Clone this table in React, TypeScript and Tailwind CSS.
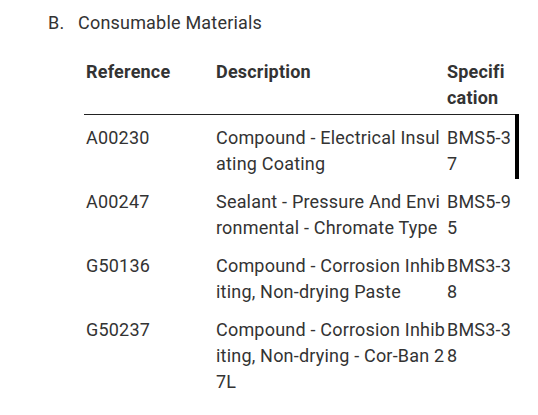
const rows = [
  { ref: "A00230", desc: "Compound - Electrical Insulating Coating", spec: "BMS5-37" },
  { ref: "A00247", desc: "Sealant - Pressure And Environmental - Chromate Type", spec: "BMS5-95" },
  { ref: "G50136", desc: "Compound - Corrosion Inhibiting, Non-drying Paste", spec: "BMS3-38" },
  { ref: "G50237", desc: "Compound - Corrosion Inhibiting, Non-drying - Cor-Ban 27L", spec: "BMS3-38" },
];

export default function App() {
  return (
    <div className="w-[538px] h-[415px] overflow-hidden bg-white text-[#333333] text-[18px] tracking-[0.2px] leading-[26px] font-['Roboto',sans-serif]">
      <div className="pt-[10px] pl-[48px] flex">
        <span className="w-[30px]">B.</span>
        <span>Consumable Materials</span>
      </div>
      <table className="ml-[84px] mt-[13px] table-fixed border-collapse w-[433px]">
        <colgroup>
          <col className="w-[132px]" />
          <col className="w-[231px]" />
          <col className="w-[70px]" />
        </colgroup>
        <thead>
          <tr className="border-b border-[#222222]">
            <th className="text-left align-top font-bold pt-[10px] pb-[3px] pl-[2px]">Reference</th>
            <th className="text-left align-top font-bold pt-[10px] pb-[3px]">Description</th>
            <th className="text-left align-top font-bold pt-[10px] pb-[3px] pr-[4px] break-all">Specification</th>
          </tr>
        </thead>
        <tbody>
          {rows.map((r, i) => (
            <tr key={r.ref}>
              <td className="align-top pt-[10px] pb-[2px] pl-[2px]">{r.ref}</td>
              <td className="align-top pt-[10px] pb-[2px] break-all pr-[1px]">{r.desc}</td>
              <td
                className={
                  i === 0
                    ? "align-top pt-[10px] pb-[2px] break-all border-r-[4px] border-black"
                    : "align-top pt-[10px] pb-[2px] break-all pr-[4px]"
                }
              >
                {r.spec}
              </td>
            </tr>
          ))}
        </tbody>
      </table>
    </div>
  );
}
